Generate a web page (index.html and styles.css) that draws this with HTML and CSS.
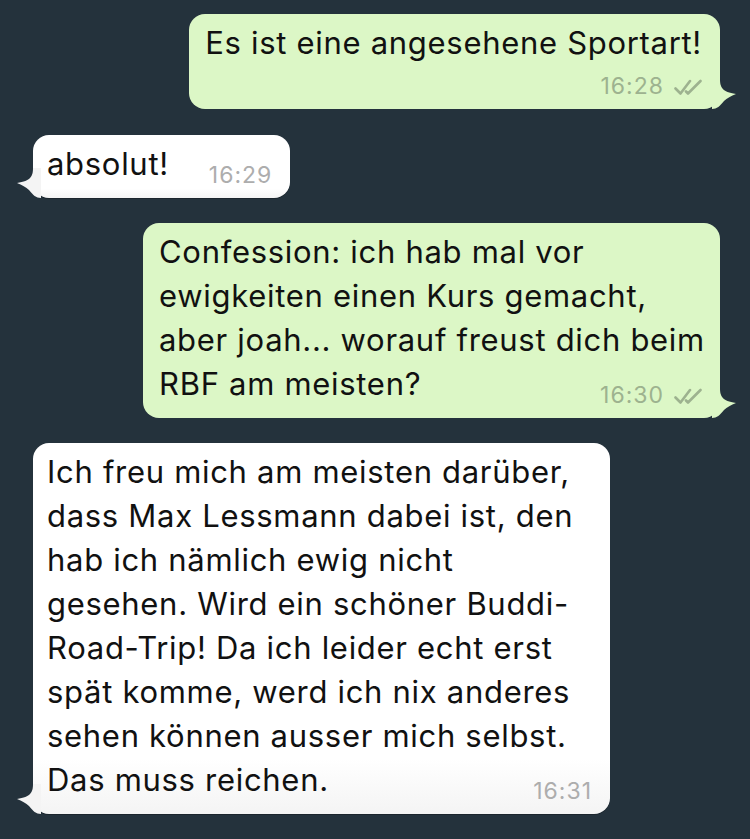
FILE: index.html
```html
<!DOCTYPE html>
<html lang="de">
<head>
<meta charset="utf-8">
<title>Chat</title>
<link rel="stylesheet" href="styles.css">
</head>
<body>
<main class="chat">
  <div class="row row--out">
    <div class="bubble bubble--out">
      <p class="text">Es ist eine angesehene Sportart!</p>
      <div class="meta meta--below">16:28
        <svg class="ticks" viewBox="0 0 28 16" width="28" height="16" aria-hidden="true"><path d="M1.5 9.5 L6.5 14.5 L16 2 M12 12.5 L14 14.5 L26.5 2" fill="none" stroke="currentColor" stroke-width="2.6" stroke-linecap="round" stroke-linejoin="round"/></svg>
      </div>
      <svg class="tail" viewBox="0 0 24 30" width="24" height="30" aria-hidden="true"><path d="M0 0 L8 0 C8 8 10 13 24 15 C19 17 15 19 12 22 C8 27 5 30 0 30 Z"/></svg>
    </div>
  </div>

  <div class="row row--in row--gap-sm">
    <div class="bubble bubble--in">
      <p class="text">absolut!<span class="meta meta--float meta--spaced">16:29</span></p>
      <svg class="tail" viewBox="0 0 24 30" width="24" height="30" aria-hidden="true"><path d="M0 0 L8 0 C8 8 10 13 24 15 C19 17 15 19 12 22 C8 27 5 30 0 30 Z"/></svg>
    </div>
  </div>

  <div class="row row--out">
    <div class="bubble bubble--out bubble--wide">
      <p class="text">Confession: ich hab mal vor<br>ewigkeiten einen Kurs gemacht,<br>aber joah... worauf freust dich beim<br>RBF am meisten?<span class="meta meta--float">16:30
        <svg class="ticks" viewBox="0 0 28 16" width="28" height="16" aria-hidden="true"><path d="M1.5 9.5 L6.5 14.5 L16 2 M12 12.5 L14 14.5 L26.5 2" fill="none" stroke="currentColor" stroke-width="2.6" stroke-linecap="round" stroke-linejoin="round"/></svg></span></p>
      <svg class="tail" viewBox="0 0 24 30" width="24" height="30" aria-hidden="true"><path d="M0 0 L8 0 C8 8 10 13 24 15 C19 17 15 19 12 22 C8 27 5 30 0 30 Z"/></svg>
    </div>
  </div>

  <div class="row row--in">
    <div class="bubble bubble--in bubble--wide">
      <p class="text">Ich freu mich am meisten darüber,<br>dass Max Lessmann dabei ist, den<br>hab ich nämlich ewig nicht<br>gesehen. Wird ein schöner Buddi-<br>Road-Trip! Da ich leider echt erst<br>spät komme, werd ich nix anderes<br>sehen können ausser mich selbst.<br>Das muss reichen.<span class="meta meta--float">16:31</span></p>
      <svg class="tail" viewBox="0 0 24 30" width="24" height="30" aria-hidden="true"><path d="M0 0 L8 0 C8 8 10 13 24 15 C19 17 15 19 12 22 C8 27 5 30 0 30 Z"/></svg>
    </div>
  </div>
</main>
</body>
</html>
```

FILE: styles.css
```css
html, body {
  margin: 0;
  padding: 0;
  background: #24323c;
}

body {
  width: 750px;
  height: 839px;
  overflow: hidden;
  font-family: "Inter", "Noto Sans", "Liberation Sans", sans-serif;
  -webkit-font-smoothing: antialiased;
}

.chat {
  display: flex;
  flex-direction: column;
  gap: 25px;
  padding: 14px 30px 0 33px;
}

.row {
  display: flex;
}

.row--out {
  justify-content: flex-end;
}

.row--in {
  justify-content: flex-start;
}

.row--gap-sm {
  margin-top: 1px;
}

.bubble {
  position: relative;
  border-radius: 16px;
  padding: 7px 18px 11px 14px;
  color: #111;
  max-width: 577px;
  box-sizing: border-box;
}

.bubble--wide {
  width: 577px;
}

.bubble--out {
  background: #dcf7c6;
  padding-left: 16px;
}

.bubble--in {
  background: linear-gradient(#ffffff 85%, #f4f4f4);
  box-shadow: 0 1px 0 rgba(0, 0, 0, 0.25);
}

.text {
  margin: 0;
  font-size: 31px;
  line-height: 44px;
  letter-spacing: 0.7px;
  white-space: nowrap;
}

.meta {
  font-size: 23px;
  line-height: 24px;
  letter-spacing: 1px;
  white-space: nowrap;
  display: flex;
  align-items: center;
  gap: 10px;
}

.bubble--out .meta {
  color: #9db28f;
}

.bubble--in .meta {
  color: #adadad;
}

.meta--below {
  justify-content: flex-end;
  margin-top: 9px;
}

.meta--float {
  float: right;
  margin-top: 21px;
}

.meta--spaced {
  margin-left: 40px;
}

.ticks {
  display: block;
  margin-top: 1px;
}

.tail {
  position: absolute;
  bottom: 0;
  display: block;
}

.bubble--out .tail {
  right: -16px;
  fill: #dcf7c6;
}

.bubble--in .tail {
  left: -16px;
  transform: scaleX(-1);
  fill: #f4f4f4;
}
```
